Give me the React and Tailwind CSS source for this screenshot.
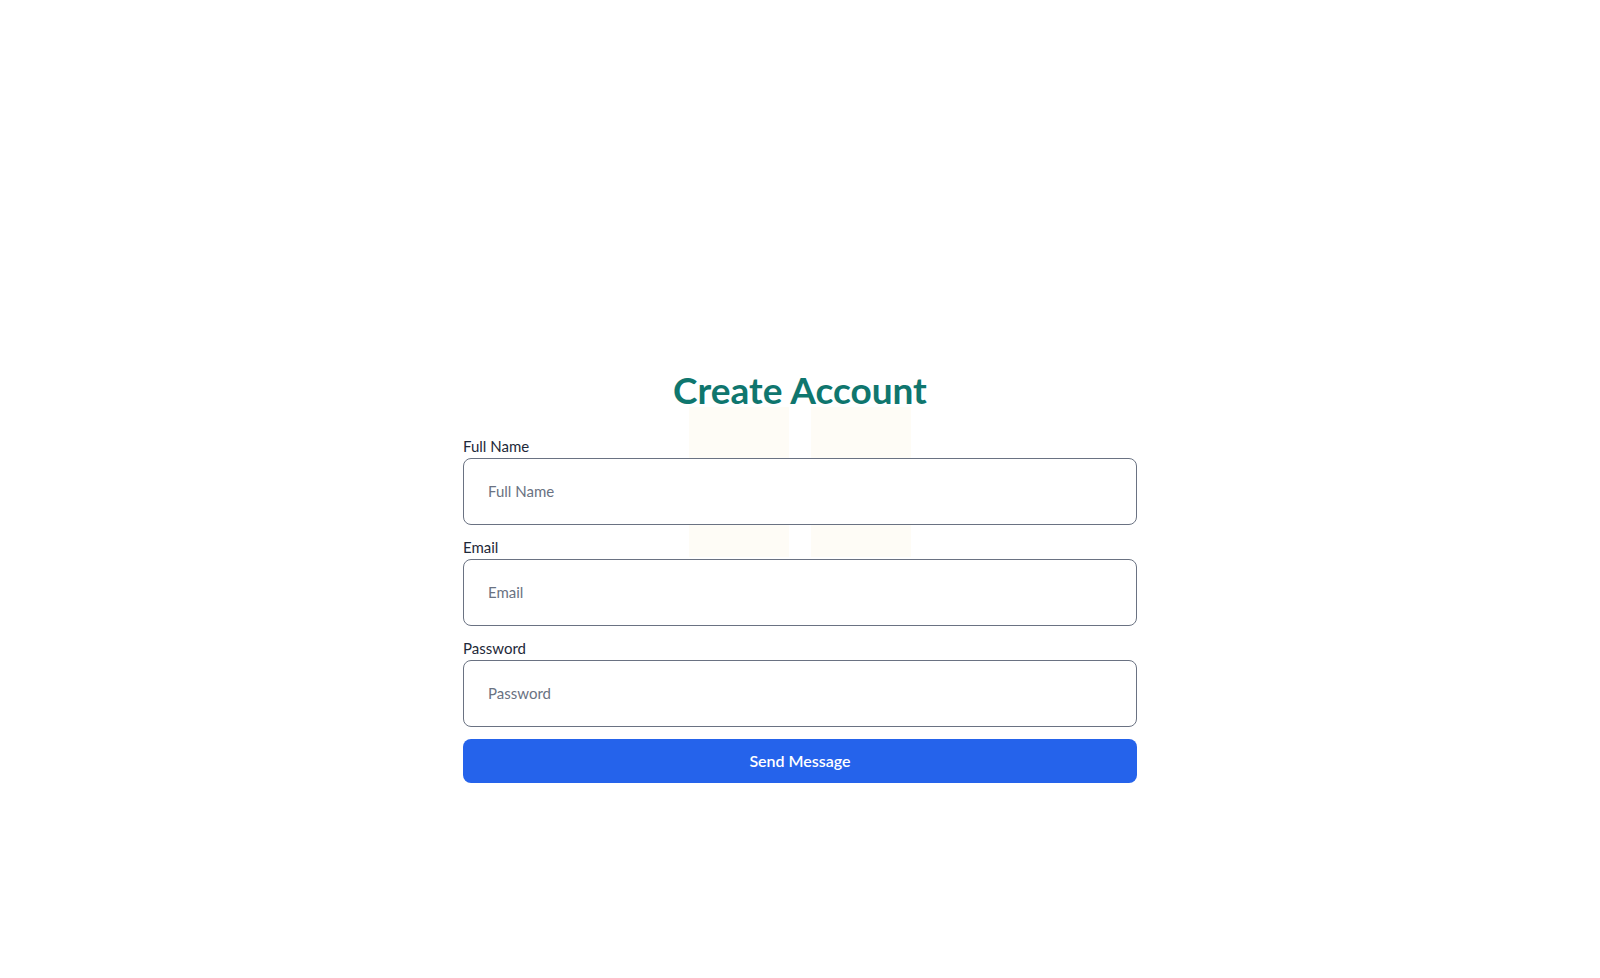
import React, { useState } from "react";

const Field = ({ label, name, type, value, onChange }) => (
  <div className="flex flex-col">
    <label htmlFor={name} className="text-[15px] leading-5 text-gray-800 mb-[2px]">
      {label}
    </label>
    <input
      id={name}
      name={name}
      type={type}
      placeholder={label}
      value={value}
      onChange={onChange}
      className="h-[67px] w-full rounded-lg border-[1.5px] border-gray-500 bg-white px-6 text-[15px] text-gray-900 placeholder:text-gray-500 outline-none"
    />
  </div>
);

const App = () => {
  const [form, setForm] = useState({ fullName: "", email: "", password: "" });

  const handleChange = (e) => {
    const { name, value } = e.target;
    setForm((prev) => ({ ...prev, [name]: value }));
  };

  return (
    <main
      className="min-h-screen bg-white"
      style={{ fontFamily: "Lato, 'Noto Sans', sans-serif" }}
    >
      {/* empty header area */}
      <div className="h-[178px]" />
      <section className="h-[800px] flex items-center justify-center">
        <div className="relative w-[674px]">
          {/* faint decorative columns behind the form */}
          <div className="absolute left-[226px] top-[33px] flex gap-[22px]">
            <div className="h-[150px] w-[100px] bg-[#fefcf6]" />
            <div className="h-[150px] w-[100px] bg-[#fefcf6]" />
          </div>
          <form
            className="relative flex flex-col gap-3"
            onSubmit={(e) => e.preventDefault()}
          >
            <h1 className="text-center text-[37px] leading-[32px] font-bold text-[#0f766e] mb-[18px]">
              Create Account
            </h1>
            <Field label="Full Name" name="fullName" type="text" value={form.fullName} onChange={handleChange} />
            <Field label="Email" name="email" type="email" value={form.email} onChange={handleChange} />
            <Field label="Password" name="password" type="password" value={form.password} onChange={handleChange} />
            <button
              type="submit"
              className="h-[44px] w-full rounded-lg bg-[#2563eb] text-[16px] font-semibold text-white"
            >
              Send Message
            </button>
          </form>
        </div>
      </section>
    </main>
  );
};

export default App;
